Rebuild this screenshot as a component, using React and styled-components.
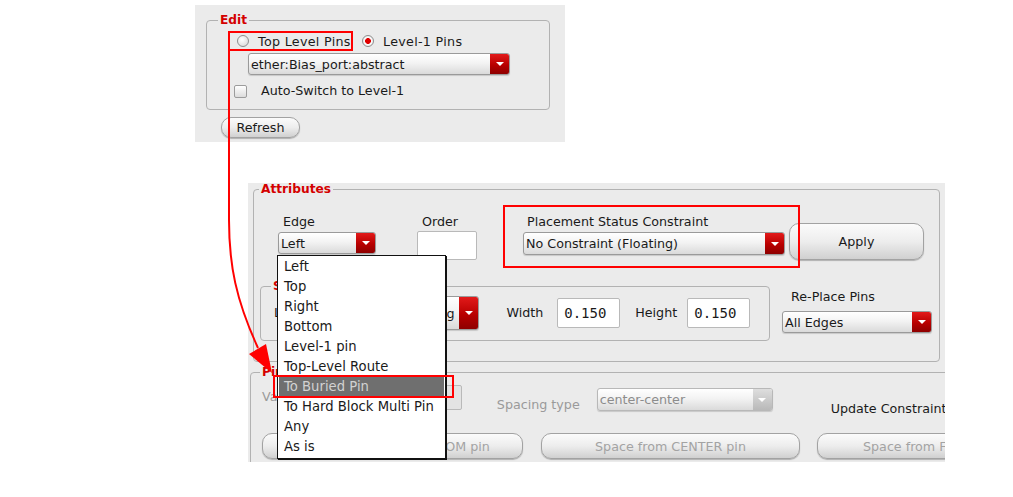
import React from "react";
import styled, { createGlobalStyle } from "styled-components";

const GlobalStyle = createGlobalStyle`
  html, body {
    margin: 0;
    padding: 0;
    background: #fff;
  }
  body {
    font-family: "DejaVu Sans", "Liberation Sans", sans-serif;
    font-size: 12.7px;
    color: #1a1a1a;
  }
`;

const Page = styled.div`
  position: relative;
  width: 1013px;
  height: 497px;
  overflow: hidden;
  display: flex;
  flex-direction: column;
`;

const Shot = styled.div`
  box-sizing: border-box;
  flex-shrink: 0;
  margin-left: ${(p) => p.$left}px;
  margin-top: ${(p) => p.$top}px;
  width: ${(p) => p.$width}px;
  height: ${(p) => p.$height}px;
  background: #ebebeb;
  overflow: hidden;
  display: flex;
  flex-direction: column;
  align-items: flex-start;
`;

const Group = styled.fieldset`
  box-sizing: border-box;
  flex-shrink: 0;
  margin: ${(p) => p.$m};
  padding: 0;
  min-width: 0;
  width: ${(p) => p.$width}px;
  height: ${(p) => p.$height}px;
  border: 1px solid #b2b2b2;
  border-radius: 4px;
`;

const Legend = styled.legend`
  margin-left: ${(p) => p.$indent}px;
  padding: 0 2px;
  font-size: 12.2px;
  line-height: 13px;
  font-weight: bold;
  color: #d40000;
`;

const Row = styled.div`
  display: flex;
  align-items: ${(p) => p.$align || "center"};
  margin-top: ${(p) => p.$mt || 0}px;
  margin-left: ${(p) => p.$ml || 0}px;
  height: ${(p) => (p.$h ? `${p.$h}px` : "auto")};
`;

const Col = styled.div`
  position: relative;
  display: flex;
  flex-direction: column;
  align-items: flex-start;
  flex-shrink: 0;
  margin-top: ${(p) => p.$mt || 0}px;
  margin-left: ${(p) => p.$ml || 0}px;
  gap: ${(p) => p.$gap || 0}px;
`;

const Label = styled.span`
  flex-shrink: 0;
  white-space: nowrap;
  line-height: 14px;
  margin-top: ${(p) => p.$mt || 0}px;
  margin-left: ${(p) => p.$ml || 0}px;
  color: ${(p) => (p.$disabled ? "#9a9a9a" : "#1a1a1a")};
`;

const PinChoice = styled.label`
  box-sizing: border-box;
  display: flex;
  align-items: center;
  gap: 9px;
  height: 20px;
  white-space: nowrap;
  margin-left: ${(p) => (p.$outlined ? 0 : 9)}px;
  width: ${(p) => (p.$outlined ? "125px" : "auto")};
  padding-left: ${(p) => (p.$outlined ? 7 : 0)}px;
  border: ${(p) => (p.$outlined ? "2px solid #f00" : "none")};
  letter-spacing: 0.3px;
`;

const Radio = styled.span`
  box-sizing: border-box;
  flex-shrink: 0;
  width: 12px;
  height: 12px;
  border-radius: 50%;
  border: 1px solid #8e8e8e;
  background: ${(p) =>
    p.$checked
      ? "radial-gradient(circle, #e00000 0 2.6px, #fdfdfd 3.2px, #d9d9d9)"
      : "radial-gradient(circle at 40% 35%, #ffffff, #d4d4d4)"};
`;

const Checkbox = styled.span`
  box-sizing: border-box;
  flex-shrink: 0;
  width: 13px;
  height: 13px;
  margin-right: 14px;
  border: 1px solid #9c9c9c;
  border-radius: 2px;
  background: linear-gradient(#ffffff, #dcdcdc);
`;

const Select = styled.div`
  box-sizing: border-box;
  flex-shrink: 0;
  display: flex;
  width: ${(p) => p.$width}px;
  height: ${(p) => p.$height}px;
  margin-left: ${(p) => p.$ml || 0}px;
  margin-top: ${(p) => p.$mt || 0}px;
  border: 1px solid ${(p) => (p.$disabled ? "#b8b8b8" : "#9a9a9a")};
  border-radius: 3px;
  background: linear-gradient(#ffffff, #f3f3f3 45%, #dadada);
  box-shadow: 0 1px 1px rgba(0, 0, 0, 0.15);
  overflow: hidden;
`;

const SelectValue = styled.span`
  flex: 1;
  display: flex;
  align-items: center;
  padding-left: 2px;
  white-space: nowrap;
  overflow: hidden;
  color: ${(p) => (p.$disabled ? "#8c8c8c" : "#1a1a1a")};
`;

const SelectArrow = styled.span`
  flex-shrink: 0;
  width: 19px;
  display: flex;
  align-items: center;
  justify-content: center;
  background: ${(p) =>
    p.$disabled
      ? "linear-gradient(#dedede, #b9b9b9)"
      : "linear-gradient(#e21a1a, #b80000 55%, #8e0000)"};
  &::after {
    content: "";
    border-left: 4px solid transparent;
    border-right: 4px solid transparent;
    border-top: 4px solid #fff;
  }
`;

const Dropdown = ({ value, disabled, ...rest }) => (
  <Select $disabled={disabled} {...rest}>
    <SelectValue $disabled={disabled}>{value}</SelectValue>
    <SelectArrow $disabled={disabled} />
  </Select>
);

const Field = styled.div`
  box-sizing: border-box;
  flex-shrink: 0;
  display: flex;
  align-items: center;
  width: ${(p) => p.$width}px;
  height: ${(p) => p.$height}px;
  margin-left: ${(p) => p.$ml || 0}px;
  margin-top: ${(p) => p.$mt || 0}px;
  padding-left: 6px;
  border: 1px solid #b9b9b9;
  border-radius: 2px;
  background: ${(p) => (p.$disabled ? "#e3e3e3" : "#fff")};
  font-family: "DejaVu Sans Mono", "Liberation Mono", monospace;
  font-size: 14px;
  color: #1a1a1a;
`;

const PillButton = styled.button`
  box-sizing: border-box;
  flex-shrink: 0;
  width: ${(p) => p.$width}px;
  height: ${(p) => p.$height}px;
  margin-left: ${(p) => p.$ml || 0}px;
  margin-top: ${(p) => p.$mt || 0}px;
  padding: 0 0 0 ${(p) => p.$pl || 0}px;
  text-align: ${(p) => p.$textAlign || "center"};
  border: 1px solid #a2a2a2;
  border-radius: 10px;
  background: linear-gradient(#fbfbfb, #ededed 50%, #d0d0d0);
  box-shadow: 0 1px 1px rgba(0, 0, 0, 0.25);
  font: inherit;
  white-space: nowrap;
  overflow: hidden;
  color: ${(p) => (p.$disabled ? "#a3a3a3" : "#1a1a1a")};
`;

const Highlight = styled.div`
  position: relative;
  box-sizing: border-box;
  flex-shrink: 0;
  width: 297px;
  height: 63px;
  margin-left: 26px;
  margin-top: 9px;
  padding: 10px 0 0 20px;
  display: flex;
  flex-direction: column;
  align-items: flex-start;
  gap: 3px;
  &::after {
    content: "";
    position: absolute;
    inset: 0;
    border: 2px solid #f00;
    z-index: 3;
    pointer-events: none;
  }
`;

const Popup = styled.ul`
  position: absolute;
  left: -1px;
  top: 40px;
  z-index: 10;
  box-sizing: border-box;
  width: 169px;
  height: 204px;
  margin: 0;
  padding: 1px;
  list-style: none;
  background: #fff;
  border: 1px solid #111;
  box-shadow: 1px 1px 0 #111;
  font-size: 13.2px;
`;

const PopupItem = styled.li`
  height: 20px;
  line-height: 20px;
  padding-left: 5px;
  white-space: nowrap;
  background: ${(p) => (p.$active ? "#6f6f6f" : "transparent")};
  color: ${(p) => (p.$active ? "#d2d2d2" : "#1a1a1a")};
`;

const ItemMark = styled.div`
  position: absolute;
  left: -5px;
  top: 119px;
  width: 181px;
  height: 23px;
  box-sizing: border-box;
  border: 2px solid #f00;
`;

const Overlay = styled.svg`
  position: absolute;
  left: 0;
  top: 0;
  z-index: 30;
  pointer-events: none;
`;

const edgeOptions = [
  "Left",
  "Top",
  "Right",
  "Bottom",
  "Level-1 pin",
  "Top-Level Route",
  "To Buried Pin",
  "To Hard Block Multi Pin",
  "Any",
  "As is",
];

export default function App() {
  return (
    <>
      <GlobalStyle />
      <Page>
        <Shot $left={195} $top={5} $width={370} $height={137}>
          <Group $m="9px 0 0 11px" $width={344} $height={96}>
            <Legend $indent={11}>Edit</Legend>
            <Row $mt={4} $ml={21}>
              <PinChoice $outlined>
                <Radio />
                Top Level Pins
              </PinChoice>
              <PinChoice>
                <Radio $checked />
                Level-1 Pins
              </PinChoice>
            </Row>
            <Dropdown
              value="ether:Bias_port:abstract"
              $width={262}
              $height={22}
              $ml={41}
              $mt={2}
            />
            <Row $mt={9} $ml={27}>
              <Checkbox />
              <Label>Auto-Switch to Level-1</Label>
            </Row>
          </Group>
          <PillButton $width={79} $height={21} $ml={26} $mt={7}>
            Refresh
          </PillButton>
        </Shot>

        <Shot $left={248} $top={41} $width={697} $height={279}>
          <Group $m="0 0 0 5px" $width={687} $height={179}>
            <Legend $indent={5}>Attributes</Legend>
            <Row $align="flex-start" $ml={24} $h={72}>
              <Col $mt={19} $gap={3}>
                <Label $ml={5}>Edge</Label>
                <Dropdown value="Left" $width={98} $height={22} />
                <Popup>
                  {edgeOptions.map((o) => (
                    <PopupItem key={o} $active={o === "To Buried Pin"}>
                      {o}
                    </PopupItem>
                  ))}
                  <ItemMark />
                </Popup>
              </Col>
              <Col $mt={19} $ml={41} $gap={2}>
                <Label $ml={5}>Order</Label>
                <Field $width={60} $height={29} />
              </Col>
              <Highlight>
                <Label $ml={4}>Placement Status Constraint</Label>
                <Dropdown
                  value="No Constraint (Floating)"
                  $width={262}
                  $height={23}
                />
              </Highlight>
              <PillButton $width={135} $height={37} $ml={-11} $mt={27}>
                Apply
              </PillButton>
            </Row>
            <Row $align="flex-start" $mt={12} $ml={6}>
              <Group $m="0" $width={510} $height={61}>
                <Legend $indent={10}>Size</Legend>
                <Row $mt={3} $h={34}>
                  <Label $ml={13}>Layer</Label>
                  <Dropdown
                    value="Metal1 drawing"
                    $width={126}
                    $height={34}
                    $ml={44}
                  />
                  <Label $ml={27}>Width</Label>
                  <Field $width={63} $height={30} $ml={14}>
                    0.150
                  </Field>
                  <Label $ml={15}>Height</Label>
                  <Field $width={63} $height={30} $ml={10}>
                    0.150
                  </Field>
                </Row>
              </Group>
              <Col $mt={10} $ml={12} $gap={7}>
                <Label $ml={9}>Re-Place Pins</Label>
                <Dropdown value="All Edges" $width={150} $height={22} />
              </Col>
            </Row>
          </Group>

          <Group $m="4px 0 0 2px" $width={760} $height={120}>
            <Legend $indent={9}>Pin Spacing</Legend>
            <Row $align="flex-start" $mt={6} $h={26}>
              <Label $disabled $ml={11} $mt={5}>
                Value
              </Label>
              <Field $disabled $width={133} $height={25} $ml={32} />
              <Label $disabled $ml={35} $mt={13}>
                Spacing type
              </Label>
              <Dropdown
                disabled
                value="center-center"
                $width={176}
                $height={23}
                $ml={17}
                $mt={3}
              />
              <Label $ml={58} $mt={17}>
                Update Constraint
              </Label>
            </Row>
            <Row $mt={22} $ml={11}>
              <PillButton $disabled $width={261} $height={26} $pl={40}>
                Space from BOTTOM pin
              </PillButton>
              <PillButton $disabled $width={259} $height={26} $ml={18}>
                Space from CENTER pin
              </PillButton>
              <PillButton
                $disabled
                $width={259}
                $height={26}
                $ml={17}
                $pl={45}
                $textAlign="left"
              >
                Space from FIRST pin
              </PillButton>
            </Row>
          </Group>
        </Shot>

        <Overlay width="1013" height="497" viewBox="0 0 1013 497">
          <path
            d="M229 51 L229 220 C229 265 236 300 258 348"
            stroke="#f00"
            strokeWidth="2"
            fill="none"
          />
          <polygon points="249,354 266,344 272,373" fill="#f00" />
        </Overlay>
      </Page>
    </>
  );
}
